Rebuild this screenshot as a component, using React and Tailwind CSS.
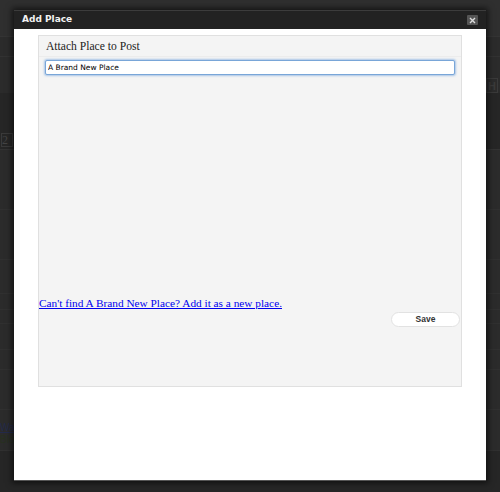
import React from 'react';

const serif = { fontFamily: '"Liberation Serif", "Times New Roman", serif' };

const Backdrop = () => {
   // dimmed admin page sitting behind the modal
   return (
      <div className="flex flex-col h-full text-[#3a3a3a]">
         <div className="h-[37px] border-b border-[#343434] bg-[#2f2f2f]" />
         <div className="h-[20px] border-b border-[#323232]" />
         <div className="h-[36px] flex justify-end items-end pr-[2px]">
            <div className="w-[12px] h-[15px] border border-[#3a3a3a] text-[11px] font-bold leading-[14px] pl-[1px]" style={{ fontFamily: '"Liberation Sans", sans-serif' }}>
               H
            </div>
         </div>
         <div className="h-[57px] bg-[#262626] border-b border-[#333] flex items-end pb-[2px] pl-[1px]">
            <div className="w-[12px] h-[14px] border border-[#3a3a3a] text-[12px] leading-[12px] text-[#444]" style={serif}>
               2
            </div>
         </div>
         <div className="h-[60px] border-b border-[#303030]" />
         <div className="h-[50px] border-b border-[#303030]" />
         <div className="h-[34px] border-b border-[#303030]" />
         <div className="h-[16px] border-b border-[#303030]" />
         <div className="h-[14px] border-b border-[#303030]" />
         <div className="h-[26px] border-b border-[#303030]" />
         <div className="h-[20px] border-b border-[#303030]" />
         <div className="h-[40px] border-b border-[#303030]" />
         <div className="h-[40px] flex flex-col pt-[12px] text-[10px] leading-[12px]" style={{ fontFamily: '"Liberation Sans", sans-serif' }}>
            <span className="underline text-[#232a4a]">Watch</span>
            <span className="text-[#27301f]">Blog</span>
         </div>
         <div className="flex-1 bg-[#262626] border-t border-[#303030]" />
      </div>
   );
};

export default function App() {
   return (
      <div className="relative w-[500px] h-[492px] overflow-hidden bg-[#2b2b2b]">
         <Backdrop />

         <div className="absolute left-[14px] top-[10px] w-[472px] h-[471px] flex flex-col bg-white shadow-[0_0_6px_2px_rgba(0,0,0,0.6)] border-b border-[#555]">
            {/* title bar */}
            <div className="h-[19px] bg-[#222] border-t border-[#3c3c3c] flex items-center justify-between pl-[8px] pr-[8px]">
               <span className="text-[#f2f2f2] font-bold text-[9px]" style={{ fontFamily: '"DejaVu Sans", "Liberation Sans", sans-serif' }}>
                  Add Place
               </span>
               <div className="w-[11px] h-[10px] bg-[#555] rounded-[1px] flex items-center justify-center">
                  <svg width="7" height="7" viewBox="0 0 7 7">
                     <path d="M1 1 L6 6 M6 1 L1 6" stroke="#ddd" strokeWidth="1.4" />
                  </svg>
               </div>
            </div>

            <div className="flex-1 pt-[6px] px-[24px]">
               <div className="h-[352px] bg-[#f4f4f4] border border-[#e0e0e0] flex flex-col">
                  <div className="h-[21px] pl-[7px] pt-[4px] border-b border-[#ececec]">
                     <h2 className="text-[11.6px] leading-[14px] text-[#222]" style={serif}>
                        Attach Place to Post
                     </h2>
                  </div>
                  <div className="px-[6px] pt-[3px]">
                     <input
                        className="block w-full h-[15px] bg-white border border-[#79a6d8] rounded-[2px] shadow-[0_0_2px_1px_rgba(110,160,220,0.55)] px-[2px] text-[7.5px] text-black outline-none"
                        style={{ fontFamily: '"DejaVu Sans", "Liberation Sans", sans-serif' }}
                        type="text"
                        defaultValue="A Brand New Place"
                     />
                  </div>
                  <div className="h-[222px]" />
                  <a href="#" className="text-[11.3px] leading-[12px] text-[#0000ee] underline" style={serif}>
                     Can't find A Brand New Place? Add it as a new place.
                  </a>
                  <div className="flex justify-end pr-[1px] pt-[3px]">
                     <button className="w-[69px] h-[15px] bg-white border border-[#e2e2e2] rounded-full text-[8.5px] font-bold text-[#333]" style={{ fontFamily: '"Liberation Sans", sans-serif' }}>
                        Save
                     </button>
                  </div>
               </div>
            </div>
         </div>
      </div>
   );
}
